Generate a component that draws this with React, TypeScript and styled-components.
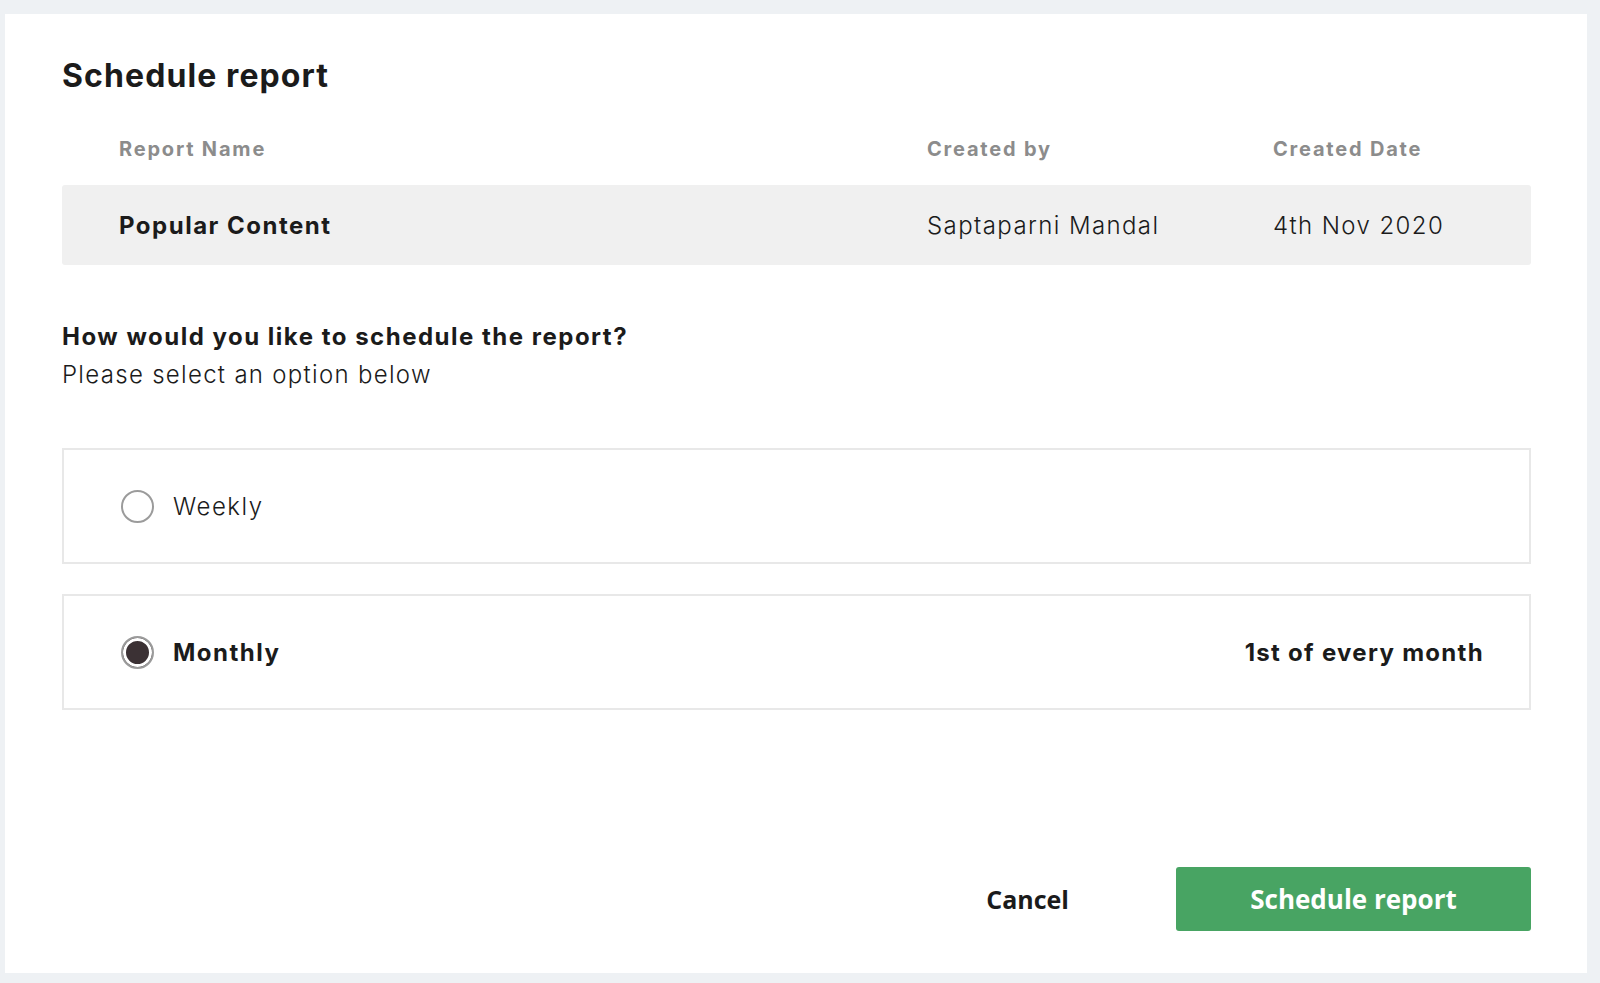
import React, { useState } from 'react';
import styled, { createGlobalStyle } from 'styled-components';

type Frequency = 'weekly' | 'monthly';

const GlobalStyle = createGlobalStyle`
  * {
    box-sizing: border-box;
  }
  body {
    margin: 0;
    background-color: #eef1f4;
    font-family: Inter, 'Open Sans', 'DejaVu Sans', sans-serif;
    color: #1b1b1b;
  }
`;

const report = {
  name: 'Popular Content',
  createdBy: 'Saptaparni Mandal',
  createdDate: '4th Nov 2020',
};

const App: React.FC = () => {
  const [frequency, setFrequency] = useState<Frequency>('monthly');

  return (
    <>
      <GlobalStyle />
      <Page>
        <Card>
          <Title>Schedule report</Title>
          <TableHead>
            <HeadCell>Report Name</HeadCell>
            <HeadCell>Created by</HeadCell>
            <HeadCell>Created Date</HeadCell>
          </TableHead>
          <TableRow>
            <ReportName>{report.name}</ReportName>
            <Cell>{report.createdBy}</Cell>
            <Cell>{report.createdDate}</Cell>
          </TableRow>

          <Question>How would you like to schedule the report?</Question>
          <Hint>Please select an option below</Hint>

          <Options>
            <Option selected={frequency === 'weekly'} onClick={() => setFrequency('weekly')}>
              <Radio checked={frequency === 'weekly'} />
              <OptionLabel selected={frequency === 'weekly'}>Weekly</OptionLabel>
            </Option>
            <Option selected={frequency === 'monthly'} onClick={() => setFrequency('monthly')}>
              <Radio checked={frequency === 'monthly'} />
              <OptionLabel selected={frequency === 'monthly'}>Monthly</OptionLabel>
              {frequency === 'monthly' && <OptionNote>1st of every month</OptionNote>}
            </Option>
          </Options>

          <Footer>
            <CancelBtn type='button'>Cancel</CancelBtn>
            <SubmitBtn type='button'>Schedule report</SubmitBtn>
          </Footer>
        </Card>
      </Page>
    </>
  );
};

const Page = styled.div`
  padding: 14px 13px 10px 5px;
`;

const Card = styled.div`
  display: flex;
  flex-direction: column;
  height: 959px;
  background-color: #ffffff;
  padding: 42px 56px 42px 57px;
`;

const Title = styled.h1`
  margin: 0;
  font-size: 32px;
  line-height: 40px;
  font-weight: 700;
  letter-spacing: 1.1px;
  color: #1b1b1b;
`;

const TableHead = styled.div`
  display: grid;
  grid-template-columns: 808px 346px 1fr;
  padding-left: 57px;
  margin-top: 41px;
`;

const HeadCell = styled.div`
  font-size: 20px;
  line-height: 24px;
  font-weight: 700;
  letter-spacing: 1.8px;
  color: #8c8c8c;
`;

const TableRow = styled.div`
  display: grid;
  grid-template-columns: 808px 346px 1fr;
  align-items: center;
  height: 80px;
  margin-top: 24px;
  padding-left: 57px;
  background-color: #f0f0f0;
  border-radius: 3px;
`;

const Cell = styled.div`
  font-size: 24px;
  font-weight: 300;
  letter-spacing: 1.4px;
  color: #1b1b1b;
`;

const ReportName = styled(Cell)`
  font-weight: 700;
  letter-spacing: 1.5px;
`;

const Question = styled.div`
  margin-top: 54px;
  font-size: 24px;
  line-height: 36px;
  font-weight: 700;
  letter-spacing: 1.5px;
`;

const Hint = styled.div`
  margin-top: 2px;
  font-size: 24px;
  line-height: 36px;
  font-weight: 300;
  letter-spacing: 1.3px;
`;

const Options = styled.div`
  display: flex;
  flex-direction: column;
  gap: 30px;
  margin-top: 55px;
`;

const Option = styled.div<{ selected: boolean }>`
  display: flex;
  align-items: center;
  height: 116px;
  padding: 0 45px 0 57px;
  border: 2px solid #e8e8e8;
  cursor: pointer;
`;

const Radio = styled.span<{ checked: boolean }>`
  flex: none;
  width: 33px;
  height: 33px;
  border-radius: 50%;
  border: 2px solid #9b9b9b;
  background-color: ${(p) => (p.checked ? '#3b3134' : '#ffffff')};
  box-shadow: ${(p) => (p.checked ? 'inset 0 0 0 3px #ffffff' : 'none')};
`;

const OptionLabel = styled.span<{ selected: boolean }>`
  margin-left: 19px;
  font-size: 24px;
  font-weight: ${(p) => (p.selected ? 700 : 300)};
  letter-spacing: 1.5px;
`;

const OptionNote = styled.span`
  margin-left: auto;
  font-size: 24px;
  font-weight: 700;
  letter-spacing: 1.3px;
`;

const Footer = styled.div`
  display: flex;
  justify-content: flex-end;
  align-items: center;
  gap: 107px;
  margin-top: auto;
`;

const CancelBtn = styled.button`
  padding: 0;
  border: none;
  background: none;
  font-family: 'Open Sans', sans-serif;
  font-size: 25px;
  font-weight: 700;
  color: #1b1b1b;
  cursor: pointer;
`;

const SubmitBtn = styled.button`
  width: 355px;
  height: 64px;
  border: none;
  border-radius: 3px;
  background-color: #48a463;
  font-family: 'Open Sans', sans-serif;
  font-size: 26px;
  font-weight: 700;
  color: #ffffff;
  cursor: pointer;
`;

export default App;
